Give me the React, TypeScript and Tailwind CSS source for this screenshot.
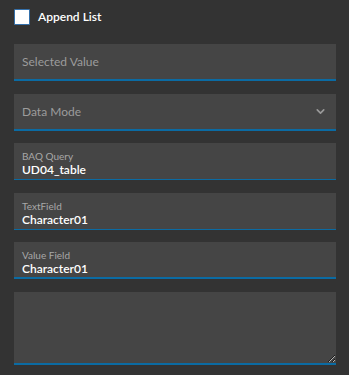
import { ChevronDown } from "lucide-react";

function Field({ label, value, thick }: { label: string; value: string; thick?: boolean }) {
  return (
    <div
      className={`bg-[#454545] h-[37px] px-2 pt-[7px] border-b-[#0b6ba3] ${thick ? "border-b-2" : "border-b"}`}
    >
      <div className="text-[10px] leading-[12px] text-[#a8a8a8]">{label}</div>
      <div className="text-[12px] leading-[15px] font-semibold text-white">{value}</div>
    </div>
  );
}

export default function App() {
  return (
    <div className="bg-[#333333] w-[349px] h-[375px] pl-[14px] pr-[13px] pt-[9px] font-['Lato',sans-serif]">
      {/* Checkbox */}
      <div className="flex items-center h-4 gap-2">
        <div className="w-4 h-4 bg-white border border-[#3470ab] rounded-[1px]" />
        <span className="text-[12px] font-semibold text-white">Append List</span>
      </div>

      <div className="mt-[19px] flex flex-col">
        <div className="bg-[#454545] h-[37px] px-2 flex items-center border-b-2 border-b-[#0b6ba3]">
          <span className="text-[12px] text-[#9c9c9c]">Selected Value</span>
        </div>
        <div className="mt-[13px] bg-[#454545] h-[37px] px-2 flex items-center justify-between border-b-2 border-b-[#0b6ba3]">
          <span className="text-[12px] text-[#9c9c9c]">Data Mode</span>
          <ChevronDown size={13} strokeWidth={3} className="text-[#9a9a9a] mr-[1px]" />
        </div>
        <div className="mt-[12px]">
          <Field label="BAQ Query" value="UD04_table" />
        </div>
        <div className="mt-[13px]">
          <Field label="TextField" value="Character01" />
        </div>
        <div className="mt-[12px]">
          <Field label="Value Field" value="Character01" thick />
        </div>
        <textarea className="mt-[13px] block bg-[#454545] h-[73px] w-full border-0 border-b-2 border-b-[#0b6ba3] outline-none text-white text-[12px] px-2 resize-y" />
      </div>
    </div>
  );
}
